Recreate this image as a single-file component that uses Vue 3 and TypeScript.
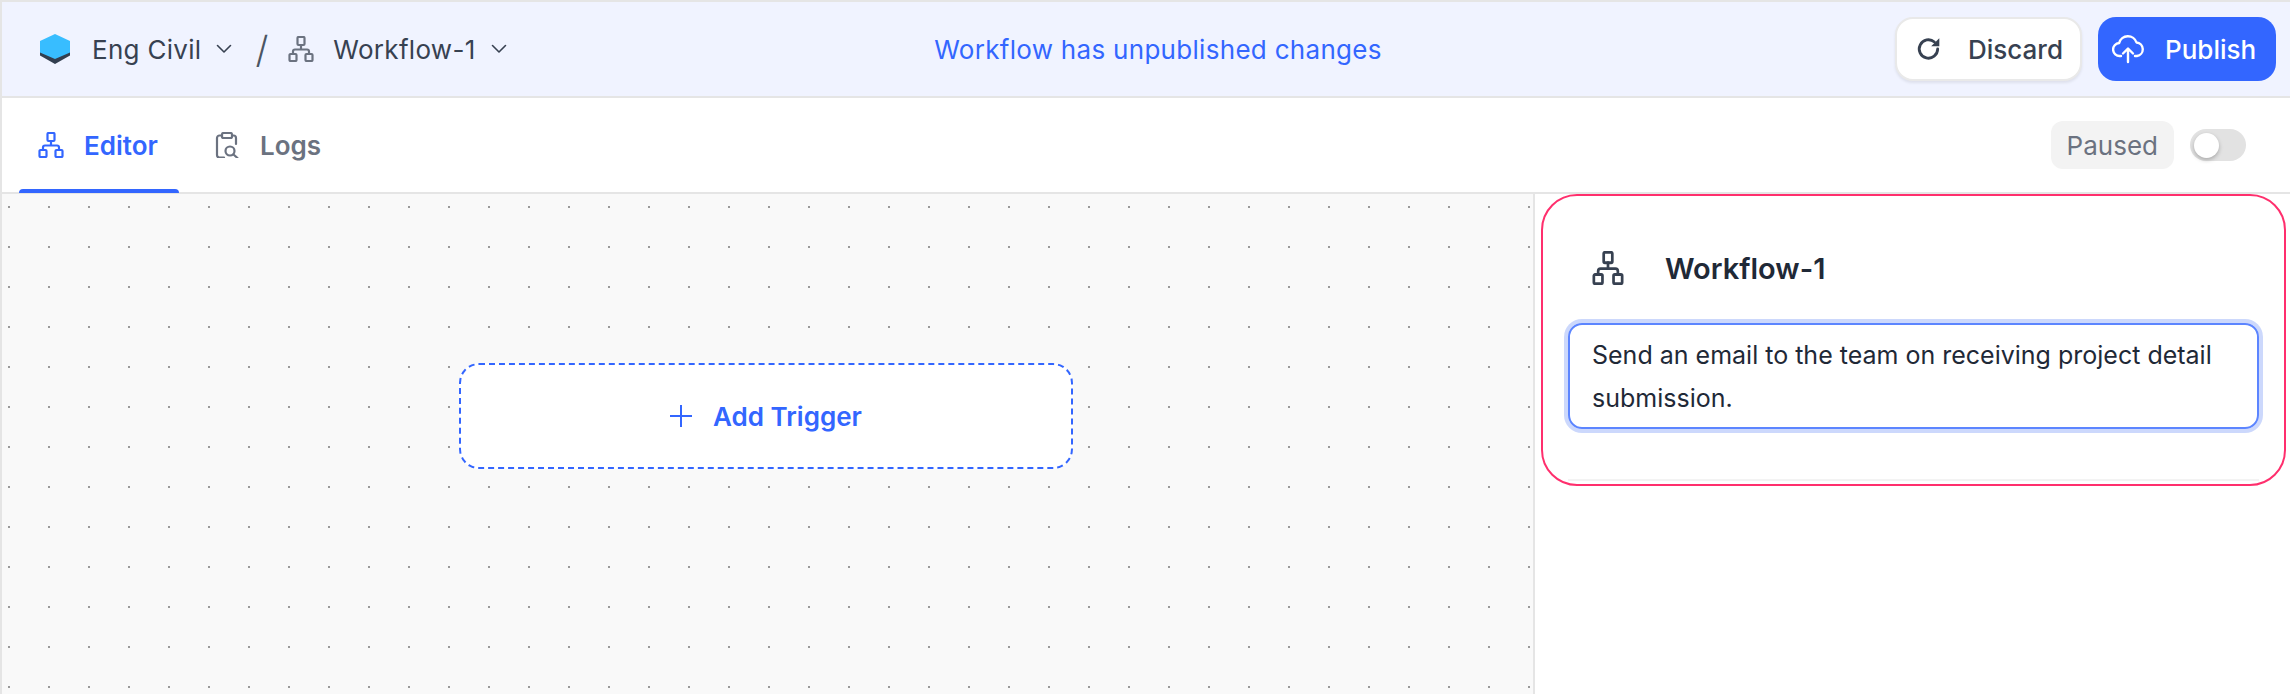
<template>
  <div class="page">
    <header class="topbar">
      <div class="crumbs">
        <svg class="logo" viewBox="0 0 30 30">
          <path d="M0 9.5 15 18 30 9.5V21.5L15 30 0 21.5Z" fill="#323e4f" />
          <path d="M15 0 30 7V18.5L15 25 0 18.5V7Z" fill="#38bdff" />
        </svg>
        <span class="crumb-text">Eng Civil</span>
        <svg class="chevron" viewBox="0 0 16 10"><path d="M1.5 1.5 8 8l6.500-6.500" /></svg>
        <span class="slash">/</span>
        <svg class="flow-icon crumb-flow" viewBox="0 0 26 26"><path v-for="d in flowPaths" :key="d" :d="d" /></svg>
        <span class="crumb-text flow-name">Workflow-1</span>
        <svg class="chevron" viewBox="0 0 16 10"><path d="M1.500 1.500 8 8l6.500-6.500" /></svg>
      </div>
      <div class="notice">Workflow has unpublished changes</div>
      <div class="actions">
        <button class="btn btn-discard">
          <svg class="btn-icon" viewBox="0 0 24 24">
            <path d="M20 12a8.500 8.500 0 1 1-3-6.500" fill="none" stroke="#374151" stroke-width="2.600" stroke-linecap="round" />
            <path d="M21.500 2v7.500H14Z" fill="#374151" />
          </svg>
          Discard
        </button>
        <button class="btn btn-publish">
          <svg class="cloud" viewBox="0 0 32 28">
            <path d="M9 21H8a6.500 6.500 0 0 1-.8-13A9 9 0 0 1 24.500 7.500 6.800 6.800 0 0 1 25 21h-2" />
            <path d="M16 27V14M11 18.500l5-5 5 5" />
          </svg>
          Publish
        </button>
      </div>
    </header>

    <nav class="tabs">
      <a class="tab tab-active">
        <svg class="flow-icon" viewBox="0 0 26 26"><path v-for="d in flowPaths" :key="d" :d="d" /></svg>
        Editor
      </a>
      <a class="tab">
        <svg class="flow-icon" viewBox="0 0 26 26">
          <path d="M8 3.500H5.500A2.500 2.500 0 0 0 3 6v17a2.500 2.500 0 0 0 2.500 2.500H10M18 3.500h1.500A2.500 2.500 0 0 1 22 6v6" />
          <rect x="8" y="1" width="10" height="5" rx="1.500" />
          <circle cx="16" cy="19" r="4.500" />
          <path d="M19.500 22.500 23.500 26" />
        </svg>
        Logs
      </a>
      <div class="status">
        <span class="paused">Paused</span>
        <span class="toggle"><span class="knob"></span></span>
      </div>
    </nav>

    <main class="main">
      <section class="canvas">
        <button class="add-trigger"><span class="plus"></span>Add Trigger</button>
      </section>
      <aside class="panel">
        <div class="card">
          <div class="card-head">
            <svg class="flow-icon card-icon" viewBox="0 0 26 26" preserveAspectRatio="none"><path v-for="d in flowPaths" :key="d" :d="d" /></svg>
            <h2 class="card-title">Workflow-1</h2>
          </div>
          <div class="desc">Send an email to the team on receiving project detail submission.</div>
          <div class="card-line"></div>
        </div>
      </aside>
    </main>
  </div>
</template>

<script setup lang="ts">
// same sitemap icon is used three times
const flowPaths: string[] = [
  'M10.500 1h5a1 1 0 0 1 1 1v6a1 1 0 0 1-1 1h-5a1 1 0 0 1-1-1V2a1 1 0 0 1 1-1Z',
  'M2.500 18h5a1 1 0 0 1 1 1v5a1 1 0 0 1-1 1h-5a1 1 0 0 1-1-1v-5a1 1 0 0 1 1-1Z',
  'M18.500 18h5a1 1 0 0 1 1 1v5a1 1 0 0 1-1 1h-5a1 1 0 0 1-1-1v-5a1 1 0 0 1 1-1Z',
  'M13 9v4.500M5 18v-2.500a2 2 0 0 1 2-2h12a2 2 0 0 1 2 2V18'
];
</script>

<style>
html,
body {
  margin: 0;
  background: #fff;
}
</style>

<style scoped>
.page {
  width: 2290px;
  height: 694px;
  box-sizing: border-box;
  border-top: 2px solid #e5e5e5;
  border-left: 2px solid #e5e5e5;
  display: flex;
  flex-direction: column;
  overflow: hidden;
  font-family: Inter, "Liberation Sans", sans-serif;
  color: #374151;
}

.topbar {
  height: 96px;
  box-sizing: border-box;
  flex: none;
  background: #f0f3ff;
  border-bottom: 2px solid #e5e5e5;
  display: grid;
  grid-template-columns: 1fr auto 1fr;
  align-items: center;
  padding: 0 14px 0 38px;
}

.crumbs {
  display: flex;
  align-items: center;
}

.logo {
  width: 30px;
  height: 30px;
  margin-right: 22px;
}

.crumb-text {
  font-size: 26px;
  letter-spacing: 0.3px;
}

.chevron {
  width: 16px;
  height: 10px;
  margin-left: 15px;
  fill: none;
  stroke: #374151;
  stroke-width: 1.600;
  stroke-linecap: round;
  stroke-linejoin: round;
}

.slash {
  font-size: 37px;
  font-weight: 300;
  color: #4b5563;
  margin-left: 23px;
  margin-right: 20px;
  line-height: 1;
}

.flow-icon {
  width: 26px;
  height: 26px;
  flex: none;
  fill: none;
  stroke: currentColor;
  stroke-width: 2.200;
  stroke-linecap: round;
  stroke-linejoin: round;
}

.crumb-flow {
  color: #6b7280;
  margin-right: 19px;
}

.notice {
  color: #3366ff;
  font-size: 26px;
  letter-spacing: 0.3px;
  white-space: nowrap;
}

.actions {
  display: flex;
  justify-content: flex-end;
  gap: 16px;
}

.btn {
  height: 64px;
  box-sizing: border-box;
  border-radius: 18px;
  display: flex;
  align-items: center;
  font: 500 26px Inter, "Liberation Sans", sans-serif;
  cursor: pointer;
}

.btn-discard {
  width: 187px;
  padding: 0 0 0 19px;
  background: #fff;
  color: #374151;
  border: 2px solid #e9e9e9;
  box-shadow: 0 2px 3px rgba(0, 0, 0, 0.08);
  gap: 26px;
}

.btn-icon {
  width: 26px;
  height: 26px;
}

.btn-publish {
  width: 178px;
  padding: 0 0 0 14px;
  background: #3366ff;
  color: #fff;
  border: none;
  gap: 21px;
}

.cloud {
  width: 32px;
  height: 30px;
  fill: none;
  stroke: #fff;
  stroke-width: 2.400;
  stroke-linecap: round;
  stroke-linejoin: round;
}

.tabs {
  height: 96px;
  box-sizing: border-box;
  flex: none;
  border-bottom: 2px solid #e5e5e5;
  display: flex;
  align-items: stretch;
  padding-left: 17px;
  position: relative;
}

.tab {
  display: flex;
  align-items: center;
  gap: 20px;
  font-size: 26px;
  font-weight: 600;
  color: #6b7280;
  padding: 0 17px 0 19px;
  margin-right: 16px;
}

.tab-active {
  color: #3366ff;
  box-sizing: border-box;
  width: 160px;
  position: relative;
}

.tab-active::after {
  content: "";
  position: absolute;
  left: 0;
  right: 0;
  bottom: -1px;
  height: 4px;
  background: #3366ff;
  border-radius: 4px 4px 0 0;
}

.status {
  margin-left: auto;
  margin-right: 44px;
  display: flex;
  align-items: center;
  gap: 16px;
}

.paused {
  height: 48px;
  box-sizing: border-box;
  padding: 0 16px;
  display: flex;
  align-items: center;
  background: #f3f3f3;
  border-radius: 12px;
  color: #6b7280;
  font-size: 26px;
}

.toggle {
  width: 56px;
  height: 32px;
  background: #e2e2e2;
  border-radius: 16px;
  display: flex;
  align-items: center;
  padding-left: 4px;
  box-sizing: border-box;
}

.knob {
  width: 25px;
  height: 25px;
  background: #fff;
  border-radius: 50%;
  box-shadow: 0 2px 4px rgba(0, 0, 0, 0.25);
}

.main {
  flex: 1;
  display: flex;
  min-height: 0;
}

.canvas {
  width: 1533px;
  flex: none;
  box-sizing: border-box;
  border-right: 2px solid #e5e5e5;
  background-color: #f9f9f9;
  background-image:
    linear-gradient(to right, transparent 2px, #f9f9f9 2px),
    linear-gradient(to bottom, #999 2px, transparent 2px);
  background-size: 40px 40px;
  background-position: 6px 12px;
  padding: 169px 0 0 457px;
}

.add-trigger {
  width: 614px;
  height: 106px;
  box-sizing: border-box;
  background: #fff;
  border: 2px dashed #3366ff;
  border-radius: 20px;
  color: #3366ff;
  font: 600 26px Inter, "Liberation Sans", sans-serif;
  display: flex;
  align-items: center;
  justify-content: center;
  gap: 21px;
  cursor: pointer;
}

.plus {
  width: 22px;
  height: 22px;
  background:
    linear-gradient(#3366ff, #3366ff) center / 22px 2px no-repeat,
    linear-gradient(#3366ff, #3366ff) center / 2px 22px no-repeat;
}

.panel {
  flex: 1;
  padding: 0 4px;
  margin-left: 2px;
}

.card {
  height: 292px;
  box-sizing: border-box;
  border: 2px solid #ff2f6d;
  border-radius: 36px;
  padding: 0 25px;
  background: #fff;
}

.card-head {
  height: 127px;
  box-sizing: border-box;
  display: flex;
  align-items: center;
  padding: 17px 0 0 24px;
  gap: 41px;
}

.card-icon {
  width: 32px;
  height: 34px;
  color: #374151;
}

.card-title {
  margin: 0;
  font-size: 29px;
  font-weight: 600;
  color: #1f2937;
}

.desc {
  height: 106px;
  box-sizing: border-box;
  border: 2px solid #5c85ff;
  border-radius: 14px;
  box-shadow: 0 0 0 4px #ccd8fc;
  padding: 9px 22px;
  font-size: 25px;
  line-height: 43px;
  color: #1f2937;
}

.card-line {
  margin-top: 50px;
  height: 2px;
  background: #f3f3f3;
}
</style>
